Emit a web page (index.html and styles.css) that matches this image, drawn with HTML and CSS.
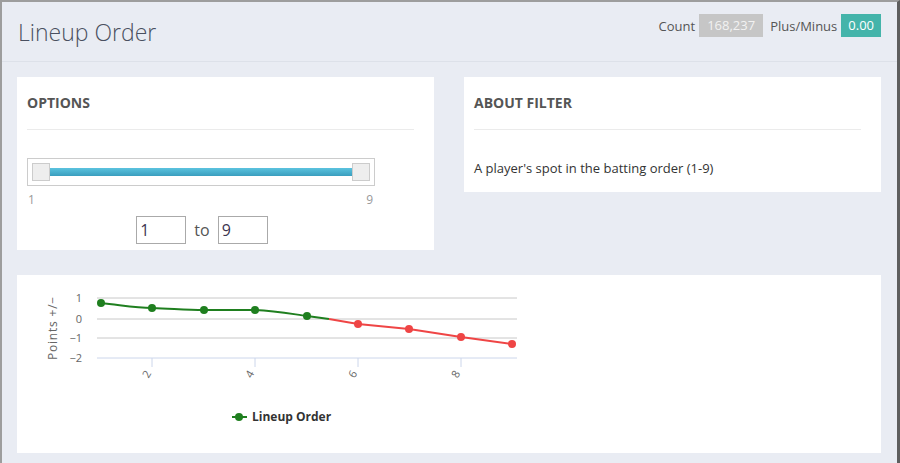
FILE: index.html
```html
<!DOCTYPE html>
<html lang="en">
<head>
    <meta charset="UTF-8">
    <meta name="viewport" content="width=device-width, initial-scale=1.0">
    <title>Lineup Order</title>
    <link rel="stylesheet" href="styles.css">
</head>
<body>
    <div class="window">
        <div class="page-header">
            <h1>Lineup Order</h1>
            <div class="stats">
                <span class="stat-label">Count</span>
                <span class="badge badge-count">168,237</span>
                <span class="stat-label">Plus/Minus</span>
                <span class="badge badge-pm">0.00</span>
            </div>
        </div>

        <div class="content">
            <div class="row">
                <div class="card card-options">
                    <h4>OPTIONS</h4>
                    <hr>
                    <div class="range">
                        <div class="slider">
                            <div class="handle"></div>
                            <div class="bar"></div>
                            <div class="handle"></div>
                        </div>
                        <div class="range-labels">
                            <span>1</span>
                            <span>9</span>
                        </div>
                        <div class="range-inputs">
                            <input type="text" value="1">
                            <span>to</span>
                            <input type="text" value="9">
                        </div>
                    </div>
                </div>

                <div class="card card-about">
                    <h4>ABOUT FILTER</h4>
                    <hr>
                    <p>A player's spot in the batting order (1-9)</p>
                </div>
            </div>

            <div class="card card-chart">
                <svg class="chart" width="540" height="178" viewBox="0 0 540 178">
                    <!-- grid -->
                    <g class="grid">
                        <line x1="80" y1="23" x2="500" y2="23"></line>
                        <line x1="80" y1="44" x2="500" y2="44"></line>
                        <line x1="80" y1="63" x2="500" y2="63"></line>
                    </g>
                    <line class="axis" x1="80" y1="83" x2="500" y2="83"></line>
                    <g class="ticks">
                        <line x1="135" y1="83" x2="135" y2="92"></line>
                        <line x1="238" y1="83" x2="238" y2="92"></line>
                        <line x1="341" y1="83" x2="341" y2="92"></line>
                        <line x1="444" y1="83" x2="444" y2="92"></line>
                    </g>

                    <g class="y-labels">
                        <text x="65" y="27">1</text>
                        <text x="65" y="48">0</text>
                        <text x="65" y="67">−1</text>
                        <text x="65" y="87">−2</text>
                    </g>
                    <text class="y-title" x="0" y="0" transform="translate(40 53) rotate(-90)">Points +/−</text>

                    <g class="x-labels">
                        <text transform="translate(133 101) rotate(-60)">2</text>
                        <text transform="translate(236 101) rotate(-60)">4</text>
                        <text transform="translate(339 101) rotate(-60)">6</text>
                        <text transform="translate(442 101) rotate(-60)">8</text>
                    </g>

                    <path class="line-pos" d="M84 28 C110 31 120 33 135 33 C160 34 170 35 187 35 C210 35 225 35 238 35 C260 36 275 39 290 41 L312 44"></path>
                    <path class="line-neg" d="M312 44 L341 49 L392 54 L444 62 L495 69"></path>

                    <g class="dots-pos">
                        <circle cx="84" cy="28" r="4"></circle>
                        <circle cx="135" cy="33" r="4"></circle>
                        <circle cx="187" cy="35" r="4"></circle>
                        <circle cx="238" cy="35" r="4"></circle>
                        <circle cx="290" cy="41" r="4"></circle>
                    </g>
                    <g class="dots-neg">
                        <circle cx="341" cy="49" r="4"></circle>
                        <circle cx="392" cy="54" r="4"></circle>
                        <circle cx="444" cy="62" r="4"></circle>
                        <circle cx="495" cy="69" r="4"></circle>
                    </g>

                    <!-- legend -->
                    <line class="legend-line" x1="215" y1="142" x2="230" y2="142"></line>
                    <circle class="legend-dot" cx="222" cy="142" r="4"></circle>
                    <text class="legend-text" x="235" y="146">Lineup Order</text>
                </svg>
            </div>
        </div>
    </div>
</body>
</html>
```

FILE: styles.css
```css
* {
    box-sizing: border-box;
}
body {
    margin: 0;
    font-family: "Open Sans", Arial, sans-serif;
    font-size: 13px;
    color: #333;
    background-color: #e9ecf3;
}
.window {
    height: 463px;
    border-top: 2px solid #9d9d9d;
    border-left: 2px solid #9d9d9d;
    border-right: 3px solid #5e5e5e;
    background-color: #e9ecf3;
    overflow: hidden;
}
.page-header {
    display: flex;
    justify-content: space-between;
    align-items: flex-start;
    height: 60px;
    padding: 12px 16px 0 16px;
    border-bottom: 1px solid #dde1e9;
}
h1 {
    margin: 3px 0 0;
    font-size: 23px;
    font-weight: 300;
    line-height: 30px;
    color: #4a5060;
}
.stats {
    display: flex;
    align-items: center;
    gap: 4px;
}
.stat-label {
    color: #555;
    font-size: 13px;
}
.badge {
    display: inline-block;
    height: 23px;
    line-height: 23px;
    padding: 0 8px;
    font-size: 13px;
    color: #fff;
}
.badge-count {
    background-color: #c6c6c6;
    color: #f2f2f2;
    margin-right: 3px;
}
.badge-pm {
    background-color: #44b4aa;
    padding: 0 7px;
}
.content {
    padding: 15px 16px 0 15px;
}
.row {
    display: flex;
    align-items: flex-start;
    gap: 30px;
    margin-bottom: 25px;
}
.card {
    background-color: #fff;
}
.card-options,
.card-about {
    width: 417px;
    padding: 10px 20px 6px 10px;
}
.card-about {
    padding-bottom: 15px;
}
h4 {
    margin: 6px 0 0;
    font-size: 14px;
    font-weight: 700;
    line-height: 20px;
    color: #555;
}
hr {
    margin: 16px 0 0;
    border: 0;
    border-top: 1px solid #ebebeb;
}
.card-about p {
    margin: 29px 0 0;
    line-height: 18px;
    color: #333;
}
.range {
    width: 348px;
    margin-top: 28px;
}
.slider {
    display: flex;
    align-items: center;
    height: 28px;
    padding: 0 4px;
    border: 1px solid #ccc;
}
.handle {
    width: 18px;
    height: 18px;
    background-color: #eee;
    border: 1px solid #ccc;
}
.bar {
    flex: 1;
    height: 8px;
    background: linear-gradient(#5bc3df, #3a9ebe);
}
.range-labels {
    display: flex;
    justify-content: space-between;
    padding: 0 2px 0 1px;
    margin-top: 6px;
    font-size: 12px;
    line-height: 16px;
    color: #999;
}
.range-inputs {
    display: flex;
    justify-content: center;
    align-items: center;
    gap: 8px;
    margin-top: 8px;
    padding-left: 2px;
}
.range-inputs input {
    width: 50px;
    height: 28px;
    padding: 0 3px;
    border: 1px solid #aaa;
    font-family: "Open Sans", Arial, sans-serif;
    font-size: 16px;
    color: #3d3550;
}
.range-inputs span {
    font-size: 16px;
    color: #555;
}
.card-chart {
    height: 178px;
}
.chart {
    display: block;
}
.grid line {
    stroke: #c8c8c8;
    stroke-width: 1;
}
.axis,
.ticks line {
    stroke: #ccd6eb;
    stroke-width: 1;
}
.y-labels text {
    font-family: "Open Sans", Arial, sans-serif;
    font-size: 11px;
    fill: #666;
    text-anchor: end;
}
.y-title {
    font-family: "Open Sans", Arial, sans-serif;
    font-size: 12px;
    fill: #666;
    text-anchor: middle;
    letter-spacing: 0.8px;
}
.x-labels text {
    font-family: "Open Sans", Arial, sans-serif;
    font-size: 11px;
    fill: #666;
    text-anchor: middle;
}
.line-pos,
.line-neg {
    fill: none;
    stroke-width: 2;
}
.line-pos {
    stroke: #1f7f1f;
}
.line-neg {
    stroke: #ef4545;
}
.dots-pos circle,
.legend-dot {
    fill: #1f7f1f;
}
.dots-neg circle {
    fill: #ef4545;
}
.legend-line {
    stroke: #1f7f1f;
    stroke-width: 2;
}
.legend-text {
    font-family: "Open Sans", Arial, sans-serif;
    font-size: 12px;
    font-weight: 700;
    fill: #333;
}
```
